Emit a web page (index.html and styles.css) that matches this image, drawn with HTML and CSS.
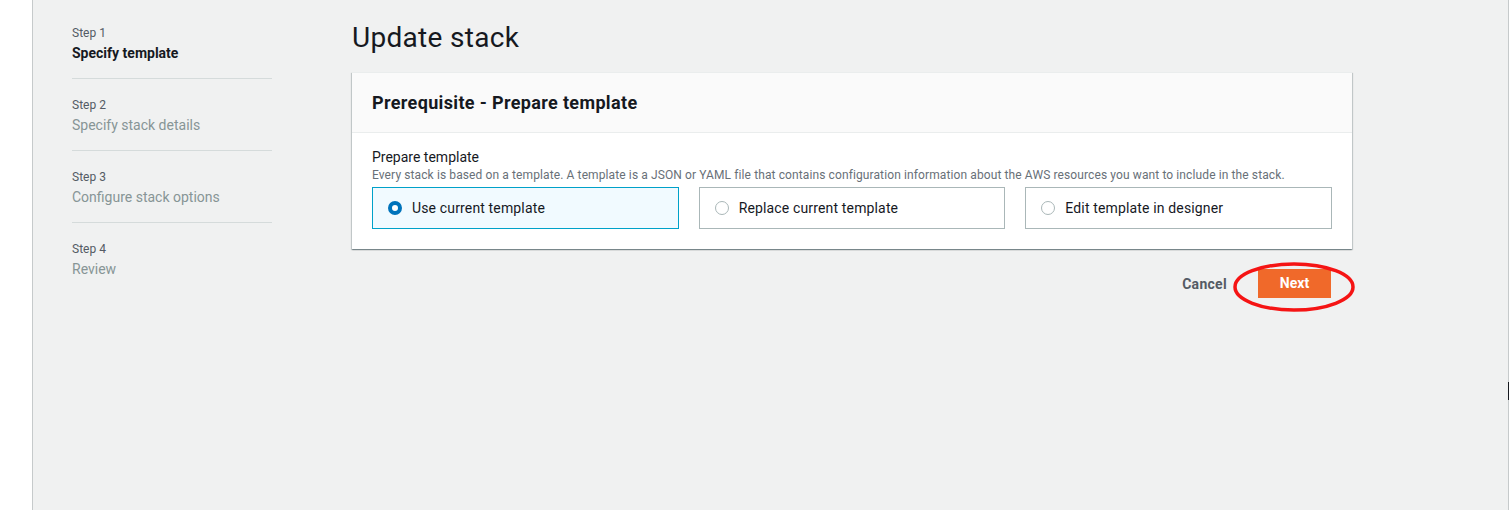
FILE: index.html
```html
<!DOCTYPE html>
<html lang="en">
<head>
<meta charset="utf-8">
<title>Update stack</title>
<link rel="stylesheet" href="styles.css">
</head>
<body>
<div class="gutter"></div>
<div class="main">
  <nav class="steps">
    <div class="step">
      <div class="step-num">Step 1</div>
      <div class="step-label active">Specify template</div>
    </div>
    <div class="step">
      <div class="step-num">Step 2</div>
      <div class="step-label">Specify stack details</div>
    </div>
    <div class="step">
      <div class="step-num">Step 3</div>
      <div class="step-label">Configure stack options</div>
    </div>
    <div class="step last">
      <div class="step-num">Step 4</div>
      <div class="step-label">Review</div>
    </div>
  </nav>
  <section class="content">
    <h1 class="title">Update stack</h1>
    <div class="card">
      <div class="card-header">Prerequisite - Prepare template</div>
      <div class="card-body">
        <div class="field-label">Prepare template</div>
        <div class="field-desc">Every stack is based on a template. A template is a JSON or YAML file that contains configuration information about the AWS resources you want to include in the stack.</div>
        <div class="tiles">
          <div class="tile selected"><span class="radio on"></span><span>Use current template</span></div>
          <div class="tile"><span class="radio"></span><span>Replace current template</span></div>
          <div class="tile"><span class="radio"></span><span>Edit template in designer</span></div>
        </div>
      </div>
    </div>
    <div class="actions">
      <span class="cancel">Cancel</span>
      <span class="next-wrap">
        <span class="next">Next</span>
        <svg class="circle" width="126" height="54" viewBox="0 0 126 54"><ellipse cx="63" cy="26" rx="59" ry="23" fill="none" stroke="#f51414" stroke-width="3.5"/></svg>
      </span>
    </div>
  </section>
  <div class="scroll-mark"></div>
</div>
</body>
</html>
```
FILE: styles.css
```css
* { box-sizing: border-box; }
html, body { margin: 0; padding: 0; }
body {
  display: flex;
  height: 510px;
  overflow: hidden;
  font-family: Roboto, "Liberation Sans", sans-serif;
  color: #16191f;
  background: #fff;
}
.gutter {
  width: 33px;
  flex: none;
  background: #fff;
  border-right: 1px solid #c6cacb;
}
.main {
  flex: 1;
  position: relative;
  display: flex;
  background: #f0f1f1;
  border-right: 1px solid #c6cacb;
  padding-left: 39px;
}
.steps {
  width: 200px;
  flex: none;
  padding-top: 7px;
}
.step {
  padding: 19px 0 15px;
  border-bottom: 1px solid #d5dbdb;
}
.step.last { border-bottom: none; }
.step-num {
  font-size: 12px;
  line-height: 14px;
  color: #545b64;
  margin-bottom: 3px;
}
.step-label {
  font-size: 14px;
  line-height: 20px;
  color: #879596;
}
.step-label.active { color: #16191f; font-weight: 700; }
.content {
  width: 1000px;
  margin-left: 80px;
  flex: none;
}
.title {
  margin: 0;
  padding-top: 20px;
  font-size: 28px;
  font-weight: 400;
  line-height: 36px;
  height: 72px;
  letter-spacing: 0.3px;
}
.card {
  width: 1000px;
  background: #fff;
  border-top: 1px solid #eaeded;
  box-shadow: 0 1px 1px 0 rgba(0,28,36,.3), 1px 1px 1px 0 rgba(0,28,36,.15), -1px 1px 1px 0 rgba(0,28,36,.15);
}
.card-header {
  background: #fafafa;
  border-bottom: 1px solid #eaeded;
  padding: 19px 20px 18px;
  font-size: 18px;
  line-height: 22px;
  font-weight: 700;
  letter-spacing: 0.35px;
}
.card-body {
  padding: 14px 20px 20px;
}
.field-label {
  font-size: 14px;
  line-height: 20px;
}
.field-desc {
  font-size: 12px;
  line-height: 16px;
  color: #687078;
  letter-spacing: 0.11px;
}
.tiles {
  margin-top: 4px;
  display: grid;
  grid-template-columns: 1fr 1fr 1fr;
  gap: 20px;
}
.tile {
  height: 42px;
  border: 1px solid #aab7b8;
  display: flex;
  align-items: center;
  gap: 10px;
  padding-left: 15px;
  font-size: 14px;
  letter-spacing: 0.15px;
}
.tile.selected {
  border-color: #00a1c9;
  background: #f1faff;
}
.radio {
  width: 14px;
  height: 14px;
  border-radius: 50%;
  border: 1.5px solid #aab7b8;
  background: #fff;
  flex: none;
}
.radio.on {
  border: 4px solid #0073bb;
  background: #fff;
}
.actions {
  display: flex;
  justify-content: flex-end;
  align-items: center;
  margin-top: 20px;
  padding-right: 21px;
  gap: 31px;
}
.cancel {
  font-size: 14px;
  font-weight: 700;
  color: #545b64;
  letter-spacing: 0.3px;
}
.next-wrap { position: relative; display: inline-flex; }
.next {
  display: inline-block;
  width: 73px;
  height: 29px;
  line-height: 29px;
  text-align: center;
  background: #f0692a;
  color: #fff;
  font-size: 14px;
  font-weight: 700;
}
.circle {
  position: absolute;
  left: -27px;
  top: -8px;
}
.scroll-mark {
  position: absolute;
  right: -1px;
  top: 382px;
  width: 1px;
  height: 18px;
  background: #16191f;
}
```
